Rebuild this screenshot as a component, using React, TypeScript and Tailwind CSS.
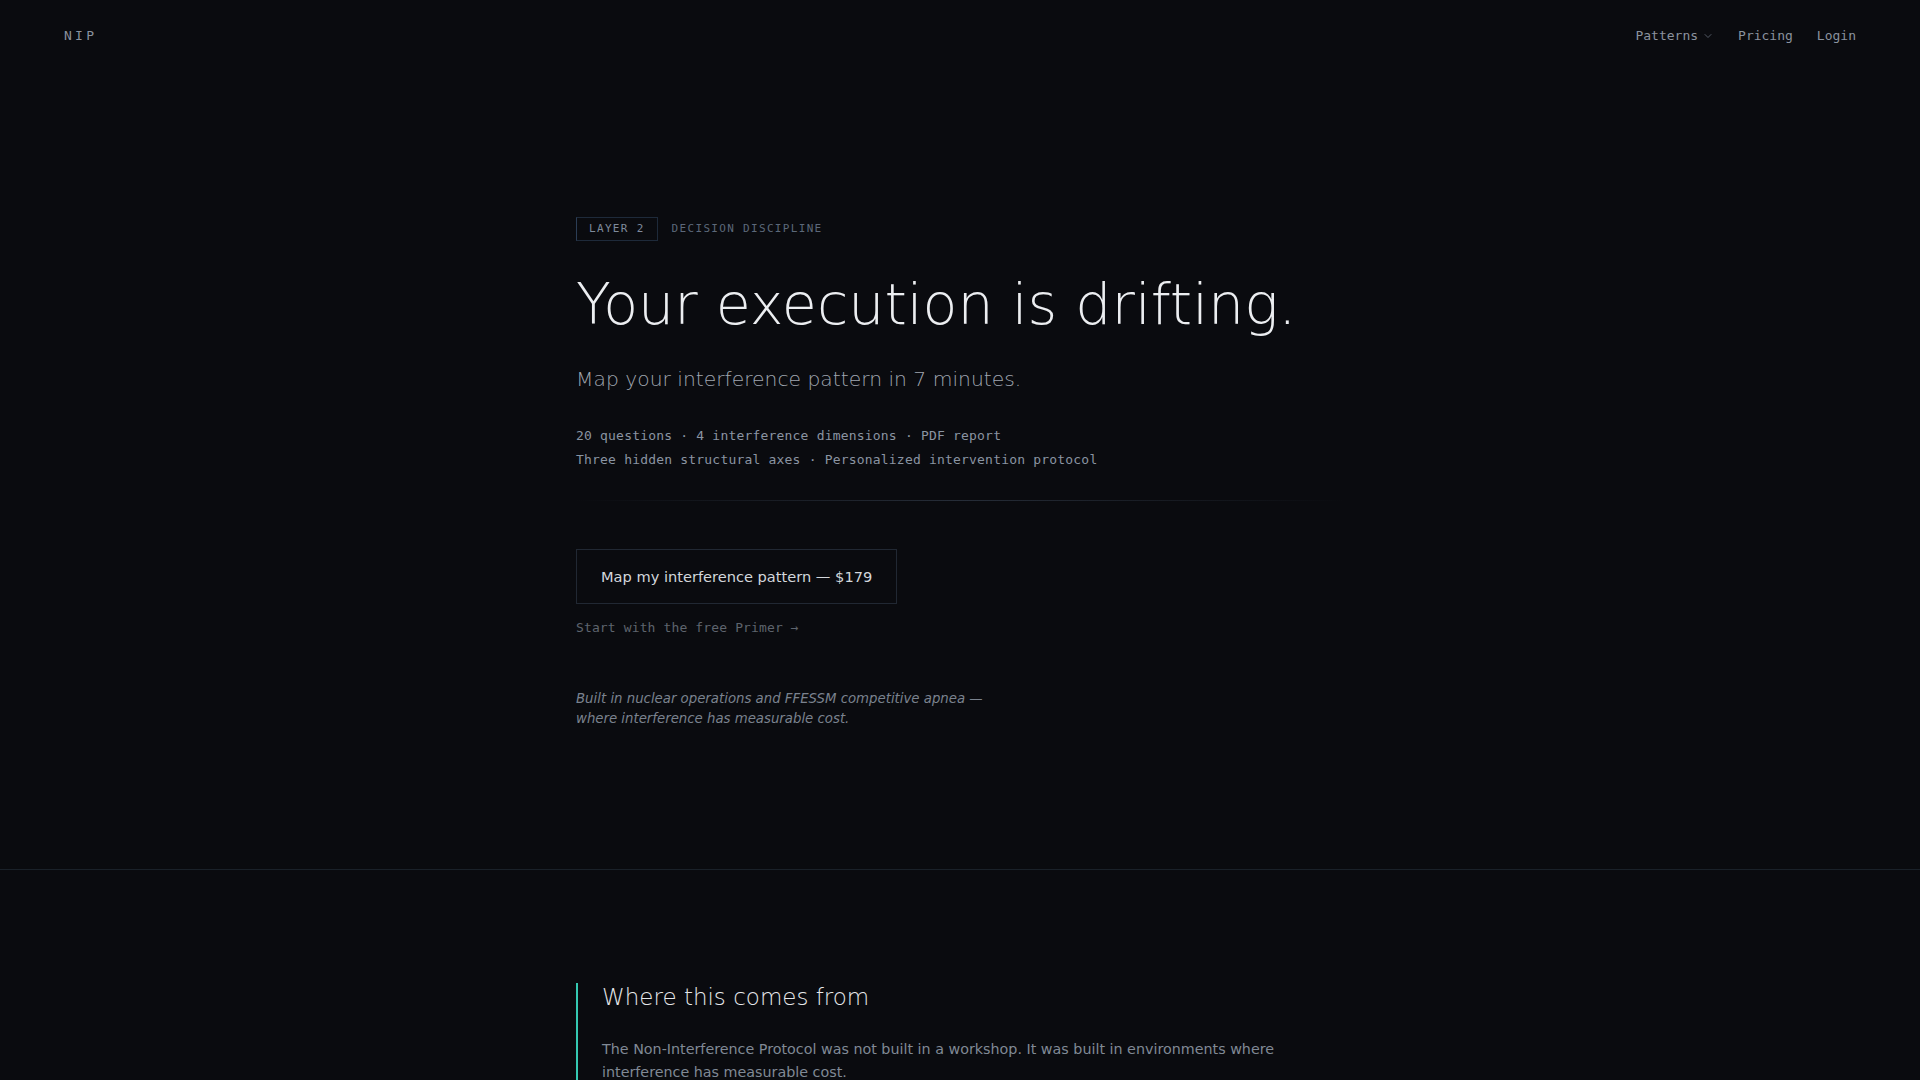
import { ChevronDown } from 'lucide-react'

const mono = "font-['DejaVu_Sans_Mono',monospace]"
const sans = "font-['DejaVu_Sans',sans-serif]"
const light = "font-['DejaVu_Sans_Light','DejaVu_Sans',sans-serif] font-light"

function Header() {
  return (
    <header className="h-[72px] px-16 flex items-center justify-between">
      <a href="#" className={`${mono} text-[13px] tracking-[0.25em] text-[#8a929e]`}>
        NIP
      </a>
      <nav className={`${mono} flex items-center gap-6 text-[13px] text-[#8a929e]`}>
        <button className="flex items-center gap-1">
          Patterns
          <ChevronDown size={12} strokeWidth={1.5} className="text-[#6b7380]" />
        </button>
        <a href="#">Pricing</a>
        <a href="#">Login</a>
      </nav>
    </header>
  )
}

function Hero() {
  return (
    <section className="pt-[145px] pb-[140px] border-b border-[#1a2129]">
      <div className="max-w-3xl mx-auto">
        {/* Eyebrow */}
        <div className={`${mono} flex items-center gap-3.5 text-[11px] tracking-[0.12em] uppercase mb-8`}>
          <span className="h-6 flex items-center px-3 border border-[#1e2a3a] border-l-[#2b3d55] text-[#7e8a9b]">
            Layer 2
          </span>
          <span className="text-[#5c6879]">Decision Discipline</span>
        </div>

        <h1 className={`${light} text-[57px] leading-[1.1] text-[#eceef1] whitespace-nowrap`}>
          Your execution is drifting.
        </h1>

        <p className={`${light} mt-[28px] text-[20.3px] leading-[1.5] text-[#a0a6b0]`}>
          Map your interference pattern in 7 minutes.
        </p>

        <div className={`${mono} mt-[30px] text-[13px] leading-6 tracking-[0.015em] text-[#8a94a2]`}>
          <p>20 questions · 4 interference dimensions · PDF report</p>
          <p>Three hidden structural axes · Personalized intervention protocol</p>
        </div>

        <div className="mt-7 mb-12 h-px bg-gradient-to-r from-transparent via-[#262d38] to-transparent" />

        <a
          href="#"
          className={`${sans} inline-flex items-center px-6 py-4 border border-[#212833] text-[14.6px] leading-[21px] text-[#d3d7dc]`}
        >
          Map my interference pattern — $179
        </a>

        <a href="#" className={`${mono} block mt-3.5 text-[13px] leading-5 tracking-[0.01em] text-[#5e646d]`}>
          Start with the free Primer →
        </a>

        <p className={`${sans} italic mt-[51px] text-[13.3px] leading-5 text-[#7a828e]`}>
          Built in nuclear operations and FFESSM competitive apnea —
          <br />
          where interference has measurable cost.
        </p>
      </div>
    </section>
  )
}

function Origin() {
  return (
    <section className="pt-[113px] pb-24">
      <div className="max-w-3xl mx-auto border-l-2 border-[#35c9b2] pl-6">
        <h2 className={`${light} text-[23px] leading-[1.3] text-[#e6e8eb]`}>
          Where this comes from
        </h2>
        <p className={`${sans} mt-[25px] text-[14.3px] leading-[23px] text-[#808995]`}>
          The Non-Interference Protocol was not built in a workshop. It was built in environments where
          interference has measurable cost.
        </p>
      </div>
    </section>
  )
}

export default function App() {
  return (
    <div className="min-h-screen bg-[#0a0b0f]">
      <Header />
      <Hero />
      <Origin />
    </div>
  )
}
